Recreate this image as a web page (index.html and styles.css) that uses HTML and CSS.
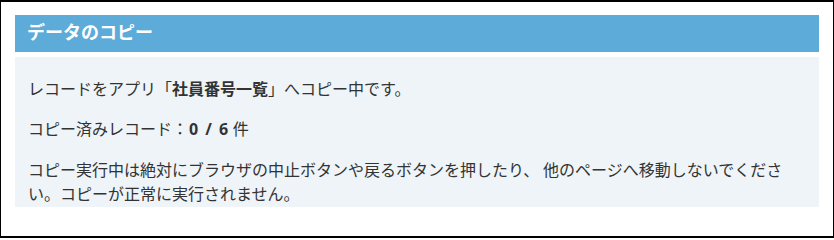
FILE: index.html
```html
<!DOCTYPE html>
<html lang="ja">
<head>
<meta charset="utf-8">
<title>データのコピー</title>
<link rel="stylesheet" href="styles.css">
</head>
<body>
<div class="frame">
  <div class="dialog">
    <h1 class="dialog-title">データのコピー</h1>
    <div class="dialog-body">
      <p class="msg">レコードをアプリ「<strong>社員番号一覧</strong>」へコピー中です。</p>
      <p class="msg">コピー済みレコード：<strong class="num">0 / 6</strong> 件</p>
      <p class="msg">コピー実行中は絶対にブラウザの中止ボタンや戻るボタンを押したり、 他のページへ移動しないでください。コピーが正常に実行されません。</p>
    </div>
  </div>
</div>
</body>
</html>
```
FILE: styles.css
```css
html, body {
  margin: 0;
  padding: 0;
  background: #ffffff;
}
.frame {
  box-sizing: border-box;
  width: 834px;
  height: 238px;
  border-style: solid;
  border-color: #000000;
  border-width: 2px 1px 2px 1px;
  padding: 13px 14px 0 14px;
  font-family: "Noto Sans CJK JP", "Noto Sans", sans-serif;
  color: #333333;
}
.dialog {
  width: 804px;
}
.dialog-title {
  margin: 0;
  height: 37px;
  line-height: 32px;
  padding: 0 12px;
  background: #5dabd9;
  color: #ffffff;
  font-size: 18px;
  font-weight: bold;
}
.dialog-body {
  margin-top: 5px;
  height: 150px;
  box-sizing: border-box;
  padding: 19px 26px 0 13px;
  background: #eef4f7;
}
.msg {
  margin: 0 0 16px 0;
  font-size: 16px;
  line-height: 24px;
}
.msg:last-child {
  margin-bottom: 0;
}
.msg strong {
  font-weight: bold;
}
.msg .num {
  font-family: "Open Sans", "Noto Sans CJK JP", sans-serif;
  margin-left: 1px;
  margin-right: 1px;
  word-spacing: 3px;
}
```
